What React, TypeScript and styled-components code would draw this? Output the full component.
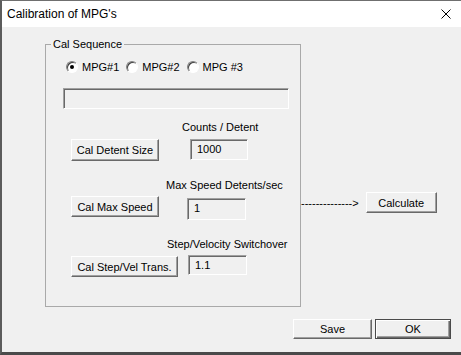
import React from "react";
import styled, { createGlobalStyle, css } from "styled-components";

const Global = createGlobalStyle`
  html, body { margin: 0; padding: 0; background: #f0f0f0; }
  body { font-family: "Liberation Sans", Arial, sans-serif; font-size: 11px; color: #000; }
  * { box-sizing: border-box; }
`;

const Window = styled.div`
  width: 461px;
  height: 355px;
  display: flex;
  flex-direction: column;
  border-left: 2px solid #5c5c5c;
  border-top: 1px solid #6f6f6f;
  border-bottom: 3px solid #4a4a4a;
  background: #f0f0f0;
`;

const TitleBar = styled.div`
  height: 26px;
  flex: none;
  background: #ffffff;
  display: flex;
  align-items: center;
  justify-content: space-between;
  padding: 0 10px 0 5px;
`;

const Title = styled.span`
  font-size: 12px;
  line-height: 14px;
  color: #000;
`;

const CloseIcon = styled.svg`
  width: 10px;
  height: 10px;
  display: block;
`;

const Body = styled.div`
  flex: 1;
  display: flex;
  flex-direction: column;
  padding-top: 11px;
`;

const MainRow = styled.div`
  display: flex;
  align-items: flex-start;
`;

const GroupBox = styled.fieldset`
  margin: 0 0 0 43px;
  padding: 0;
  width: 256px;
  height: 269px;
  border: 1px solid #a9a9a9;
  min-width: 0;
  display: flex;
  flex-direction: column;
`;

const Legend = styled.legend`
  margin-left: 5px;
  padding: 0 2px;
  font-size: 11px;
  line-height: 13px;
`;

const RadioRow = styled.div`
  display: flex;
  align-items: center;
  gap: 7px;
  height: 14px;
  margin: 9px 0 0 20px;
`;

const RadioItem = styled.label`
  display: flex;
  align-items: center;
  gap: 4px;
  line-height: 13px;
`;

const RadioCircle = styled.span<{ $checked?: boolean }>`
  width: 12px;
  height: 12px;
  border-radius: 50%;
  border: 1px solid;
  border-color: #808080 #ffffff #ffffff #808080;
  background: #ffffff;
  box-shadow: inset 1px 1px 0 #404040;
  display: flex;
  align-items: center;
  justify-content: center;
  &::after {
    content: "";
    width: 4px;
    height: 4px;
    border-radius: 50%;
    background: ${(p) => (p.$checked ? "#000" : "transparent")};
  }
`;

const sunken = css`
  border: 1px solid;
  border-color: #a0a0a0 #ffffff #ffffff #a0a0a0;
  box-shadow: inset 1px 1px 0 #696969;
  background: #f0f0f0;
`;

const StatusField = styled.div`
  ${sunken}
  width: 226px;
  height: 21px;
  margin: 14px 0 0 17px;
`;

const Section = styled.div<{ $top: number }>`
  display: flex;
  flex-direction: column;
  margin-top: ${(p) => p.$top}px;
`;

const Caption = styled.div<{ $indent: number }>`
  line-height: 13px;
  margin-left: ${(p) => p.$indent}px;
  white-space: nowrap;
`;

const CalRow = styled.div<{ $top: number; $gap: number }>`
  display: flex;
  align-items: flex-start;
  margin: ${(p) => p.$top}px 0 0 25px;
  gap: ${(p) => p.$gap}px;
`;

const Button = styled.button<{ $w: number; $h?: number; $default?: boolean }>`
  width: ${(p) => p.$w}px;
  height: ${(p) => p.$h ?? 21}px;
  padding: 0;
  font-family: "Liberation Sans", Arial, sans-serif;
  font-size: 11px;
  color: #000;
  background: #f0f0f0;
  border: 1px solid;
  border-color: #ffffff #696969 #696969 #ffffff;
  box-shadow: inset -1px -1px 0 #a0a0a0;
  ${(p) =>
    p.$default &&
    css`
      border: 1px solid #4a4a4a;
      box-shadow: inset 1px 1px 0 #ffffff, inset -1px -1px 0 #696969, inset -2px -2px 0 #a0a0a0;
    `}
`;

const ValueField = styled.div<{ $w: number; $h: number; $offset?: number }>`
  ${sunken}
  width: ${(p) => p.$w}px;
  height: ${(p) => p.$h}px;
  margin-top: ${(p) => p.$offset ?? 0}px;
  padding: 3px 0 0 6px;
  line-height: 13px;
`;

const ArrowGroup = styled.div`
  display: flex;
  align-items: center;
  gap: 7px;
  margin-top: 154px;
`;

const Arrow = styled.span`
  line-height: 13px;
  letter-spacing: 0;
  white-space: nowrap;
  margin-top: 2px;
`;

const Footer = styled.div`
  display: flex;
  justify-content: flex-end;
  gap: 3px;
  margin: 12px 10px 0 0;
`;

export default function App() {
  return (
    <>
      <Global />
      <Window>
        <TitleBar>
          <Title>Calibration of MPG's</Title>
          <CloseIcon viewBox="0 0 10 10">
            <path d="M0.5 0.5 L9.5 9.5 M9.5 0.5 L0.5 9.5" stroke="#000" strokeWidth="1" />
          </CloseIcon>
        </TitleBar>
        <Body>
          <MainRow>
            <GroupBox>
              <Legend>Cal Sequence</Legend>
              <RadioRow>
                <RadioItem>
                  <RadioCircle $checked />
                  MPG#1
                </RadioItem>
                <RadioItem>
                  <RadioCircle />
                  MPG#2
                </RadioItem>
                <RadioItem>
                  <RadioCircle />
                  MPG #3
                </RadioItem>
              </RadioRow>
              <StatusField />
              <Section $top={12}>
                <Caption $indent={136}>Counts / Detent</Caption>
                <CalRow $top={5} $gap={31}>
                  <Button $w={88} $h={22}>Cal Detent Size</Button>
                  <ValueField $w={58} $h={21}>1000</ValueField>
                </CalRow>
              </Section>
              <Section $top={18}>
                <Caption $indent={120}>Max Speed Detents/sec</Caption>
                <CalRow $top={4} $gap={28}>
                  <Button $w={88} $h={21}>Cal Max Speed</Button>
                  <ValueField $w={59} $h={22} $offset={2}>1</ValueField>
                </CalRow>
              </Section>
              <Section $top={18}>
                <Caption $indent={121}>Step/Velocity Switchover</Caption>
                <CalRow $top={5} $gap={10}>
                  <Button $w={107} $h={21}>Cal Step/Vel Trans.</Button>
                  <ValueField $w={59} $h={20} $offset={-1}>1.1</ValueField>
                </CalRow>
              </Section>
            </GroupBox>
            <ArrowGroup>
              <Arrow>--------------&gt;</Arrow>
              <Button $w={71}>Calculate</Button>
            </ArrowGroup>
          </MainRow>
          <Footer>
            <Button $w={79} $h={20}>Save</Button>
            <Button $w={76} $h={20} $default>OK</Button>
          </Footer>
        </Body>
      </Window>
    </>
  );
}
